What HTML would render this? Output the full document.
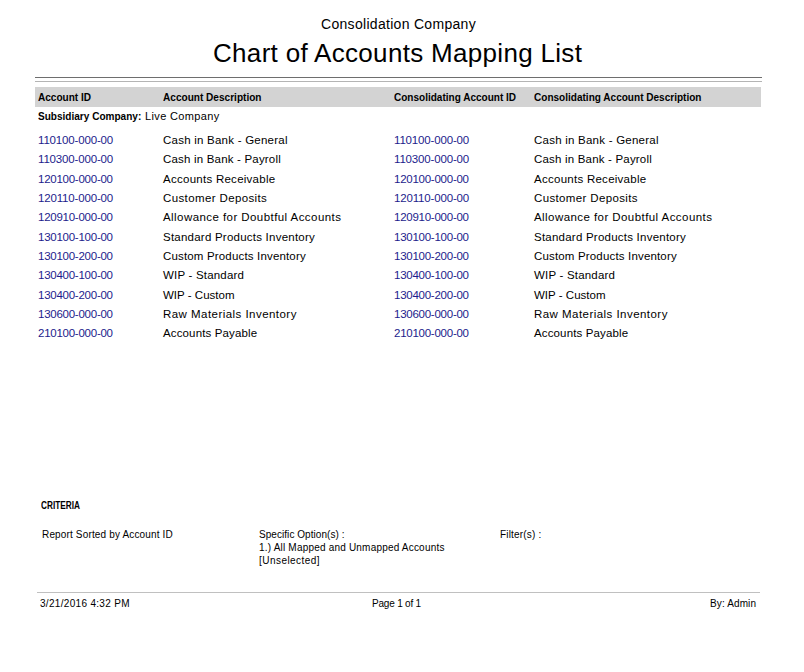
<!DOCTYPE html>
<html><head><meta charset="utf-8">
<style>
html,body{margin:0;padding:0;background:#fff;}
body{width:804px;height:672px;position:relative;overflow:hidden;font-family:"Liberation Sans",sans-serif;color:#000;}
.a{position:absolute;white-space:nowrap;line-height:1;}
.ln{position:absolute;height:1px;}
.k{}
</style></head><body>
<div class="ln" style="left:35px;width:727px;top:77px;background:#6e6e6e"></div>
<div class="ln" style="left:35px;width:727px;top:81px;background:#b4b4b4"></div>
<div class="ln" style="left:35px;width:726px;top:87px;height:20px;background:#d3d3d3"></div>
<div class="ln" style="left:37px;width:723px;top:592px;background:#c0c0c0"></div>
<div class="a" id="t1" style="left:321.00px;top:17.00px;font-size:14px;letter-spacing:0.300px;">Consolidation Company</div>
<div class="a" id="t2" style="left:213.00px;top:40.00px;font-size:26px;letter-spacing:0.311px;">Chart of Accounts Mapping List</div>
<div class="a" id="h1" style="left:38.00px;top:92.00px;font-size:11px;font-weight:bold;transform:scaleX(0.9138);transform-origin:0 0;">Account ID</div>
<div class="a" id="h2" style="left:163.00px;top:92.00px;font-size:11px;font-weight:bold;transform:scaleX(0.9159);transform-origin:0 0;">Account Description</div>
<div class="a" id="h3" style="left:394.00px;top:92.00px;font-size:11px;font-weight:bold;transform:scaleX(0.9104);transform-origin:0 0;">Consolidating Account ID</div>
<div class="a" id="h4" style="left:534.00px;top:92.00px;font-size:11px;font-weight:bold;transform:scaleX(0.9125);transform-origin:0 0;">Consolidating Account Description</div>
<div class="a" id="subb" style="left:38.00px;top:111.00px;font-size:11px;font-weight:bold;transform:scaleX(0.9131);transform-origin:0 0;">Subsidiary Company:</div>
<div class="a" id="subn" style="left:145.00px;top:111.00px;font-size:11px;letter-spacing:0.364px;">Live Company</div>
<div class="a" id="ida0" style="left:38.00px;top:135.00px;font-size:11.5px;color:#1c1c8c;letter-spacing:-0.166px;">110100-000-00</div>
<div class="a" id="desb0" style="left:163.00px;top:135.00px;font-size:11.5px;letter-spacing:0.237px;">Cash in Bank - General</div>
<div class="a" id="idc0" style="left:394.00px;top:135.00px;font-size:11.5px;color:#1c1c8c;letter-spacing:-0.166px;">110100-000-00</div>
<div class="a" id="desd0" style="left:534.00px;top:135.00px;font-size:11.5px;letter-spacing:0.237px;">Cash in Bank - General</div>
<div class="a" id="ida1" style="left:38.00px;top:154.00px;font-size:11.5px;color:#1c1c8c;letter-spacing:-0.166px;">110300-000-00</div>
<div class="a" id="desb1" style="left:163.00px;top:154.00px;font-size:11.5px;letter-spacing:0.190px;">Cash in Bank - Payroll</div>
<div class="a" id="idc1" style="left:394.00px;top:154.00px;font-size:11.5px;color:#1c1c8c;letter-spacing:-0.166px;">110300-000-00</div>
<div class="a" id="desd1" style="left:534.00px;top:154.00px;font-size:11.5px;letter-spacing:0.190px;">Cash in Bank - Payroll</div>
<div class="a" id="ida2" style="left:38.00px;top:174.00px;font-size:11.5px;color:#1c1c8c;letter-spacing:-0.250px;">120100-000-00</div>
<div class="a" id="desb2" style="left:163.00px;top:174.00px;font-size:11.5px;letter-spacing:0.265px;">Accounts Receivable</div>
<div class="a" id="idc2" style="left:394.00px;top:174.00px;font-size:11.5px;color:#1c1c8c;letter-spacing:-0.250px;">120100-000-00</div>
<div class="a" id="desd2" style="left:534.00px;top:174.00px;font-size:11.5px;letter-spacing:0.265px;">Accounts Receivable</div>
<div class="a" id="ida3" style="left:38.00px;top:193.00px;font-size:11.5px;color:#1c1c8c;letter-spacing:-0.166px;">120110-000-00</div>
<div class="a" id="desb3" style="left:163.00px;top:193.00px;font-size:11.5px;letter-spacing:0.379px;">Customer Deposits</div>
<div class="a" id="idc3" style="left:394.00px;top:193.00px;font-size:11.5px;color:#1c1c8c;letter-spacing:-0.166px;">120110-000-00</div>
<div class="a" id="desd3" style="left:534.00px;top:193.00px;font-size:11.5px;letter-spacing:0.358px;">Customer Deposits</div>
<div class="a" id="ida4" style="left:38.00px;top:212.00px;font-size:11.5px;color:#1c1c8c;letter-spacing:-0.250px;">120910-000-00</div>
<div class="a" id="desb4" style="left:163.00px;top:212.00px;font-size:11.5px;letter-spacing:0.433px;">Allowance for Doubtful Accounts</div>
<div class="a" id="idc4" style="left:394.00px;top:212.00px;font-size:11.5px;color:#1c1c8c;letter-spacing:-0.250px;">120910-000-00</div>
<div class="a" id="desd4" style="left:534.00px;top:212.00px;font-size:11.5px;letter-spacing:0.433px;">Allowance for Doubtful Accounts</div>
<div class="a" id="ida5" style="left:38.00px;top:232.00px;font-size:11.5px;color:#1c1c8c;letter-spacing:-0.250px;">130100-100-00</div>
<div class="a" id="desb5" style="left:163.00px;top:232.00px;font-size:11.5px;letter-spacing:0.232px;">Standard Products Inventory</div>
<div class="a" id="idc5" style="left:394.00px;top:232.00px;font-size:11.5px;color:#1c1c8c;letter-spacing:-0.250px;">130100-100-00</div>
<div class="a" id="desd5" style="left:534.00px;top:232.00px;font-size:11.5px;letter-spacing:0.232px;">Standard Products Inventory</div>
<div class="a" id="ida6" style="left:38.00px;top:251.00px;font-size:11.5px;color:#1c1c8c;letter-spacing:-0.250px;">130100-200-00</div>
<div class="a" id="desb6" style="left:163.00px;top:251.00px;font-size:11.5px;letter-spacing:0.166px;">Custom Products Inventory</div>
<div class="a" id="idc6" style="left:394.00px;top:251.00px;font-size:11.5px;color:#1c1c8c;letter-spacing:-0.250px;">130100-200-00</div>
<div class="a" id="desd6" style="left:534.00px;top:251.00px;font-size:11.5px;letter-spacing:0.166px;">Custom Products Inventory</div>
<div class="a" id="ida7" style="left:38.00px;top:270.00px;font-size:11.5px;color:#1c1c8c;letter-spacing:-0.250px;">130400-100-00</div>
<div class="a" id="desb7" style="left:163.00px;top:270.00px;font-size:11.5px;letter-spacing:0.195px;">WIP - Standard</div>
<div class="a" id="idc7" style="left:394.00px;top:270.00px;font-size:11.5px;color:#1c1c8c;letter-spacing:-0.250px;">130400-100-00</div>
<div class="a" id="desd7" style="left:534.00px;top:270.00px;font-size:11.5px;letter-spacing:0.195px;">WIP - Standard</div>
<div class="a" id="ida8" style="left:38.00px;top:290.00px;font-size:11.5px;color:#1c1c8c;letter-spacing:-0.250px;">130400-200-00</div>
<div class="a" id="desb8" style="left:163.00px;top:290.00px;font-size:11.5px;letter-spacing:0.013px;">WIP - Custom</div>
<div class="a" id="idc8" style="left:394.00px;top:290.00px;font-size:11.5px;color:#1c1c8c;letter-spacing:-0.250px;">130400-200-00</div>
<div class="a" id="desd8" style="left:534.00px;top:290.00px;font-size:11.5px;letter-spacing:0.013px;">WIP - Custom</div>
<div class="a" id="ida9" style="left:38.00px;top:309.00px;font-size:11.5px;color:#1c1c8c;letter-spacing:-0.250px;">130600-000-00</div>
<div class="a" id="desb9" style="left:163.00px;top:309.00px;font-size:11.5px;letter-spacing:0.456px;">Raw Materials Inventory</div>
<div class="a" id="idc9" style="left:394.00px;top:309.00px;font-size:11.5px;color:#1c1c8c;letter-spacing:-0.250px;">130600-000-00</div>
<div class="a" id="desd9" style="left:534.00px;top:309.00px;font-size:11.5px;letter-spacing:0.456px;">Raw Materials Inventory</div>
<div class="a" id="ida10" style="left:38.00px;top:328.00px;font-size:11.5px;color:#1c1c8c;letter-spacing:-0.250px;">210100-000-00</div>
<div class="a" id="desb10" style="left:163.00px;top:328.00px;font-size:11.5px;letter-spacing:0.133px;">Accounts Payable</div>
<div class="a" id="idc10" style="left:394.00px;top:328.00px;font-size:11.5px;color:#1c1c8c;letter-spacing:-0.250px;">210100-000-00</div>
<div class="a" id="desd10" style="left:534.00px;top:328.00px;font-size:11.5px;letter-spacing:0.133px;">Accounts Payable</div>
<div class="a k" id="crit" style="left:41.00px;top:501.00px;font-size:10px;font-weight:bold;transform:scaleX(0.8244);transform-origin:0 0;">CRITERIA</div>
<div class="a k" id="sort" style="left:42.00px;top:530.00px;font-size:10px;letter-spacing:0.154px;">Report Sorted by Account ID</div>
<div class="a k" id="opt1" style="left:259.00px;top:530.00px;font-size:10px;letter-spacing:0.053px;">Specific Option(s) :</div>
<div class="a k" id="opt2" style="left:259.00px;top:543.00px;font-size:10px;letter-spacing:0.198px;">1.) All Mapped and Unmapped Accounts</div>
<div class="a k" id="opt3" style="left:259.00px;top:556.00px;font-size:10px;letter-spacing:0.454px;">[Unselected]</div>
<div class="a k" id="filt" style="left:500.00px;top:530.00px;font-size:10px;letter-spacing:0.180px;">Filter(s) :</div>
<div class="a k" id="date" style="left:40.00px;top:599.00px;font-size:10px;letter-spacing:0.312px;">3/21/2016 4:32 PM</div>
<div class="a k" id="page" style="left:372.00px;top:599.00px;font-size:10px;letter-spacing:-0.200px;">Page 1 of 1</div>
<div class="a k" id="by" style="left:710.00px;top:599.00px;font-size:10px;letter-spacing:0.125px;">By: Admin</div>
</body></html>
